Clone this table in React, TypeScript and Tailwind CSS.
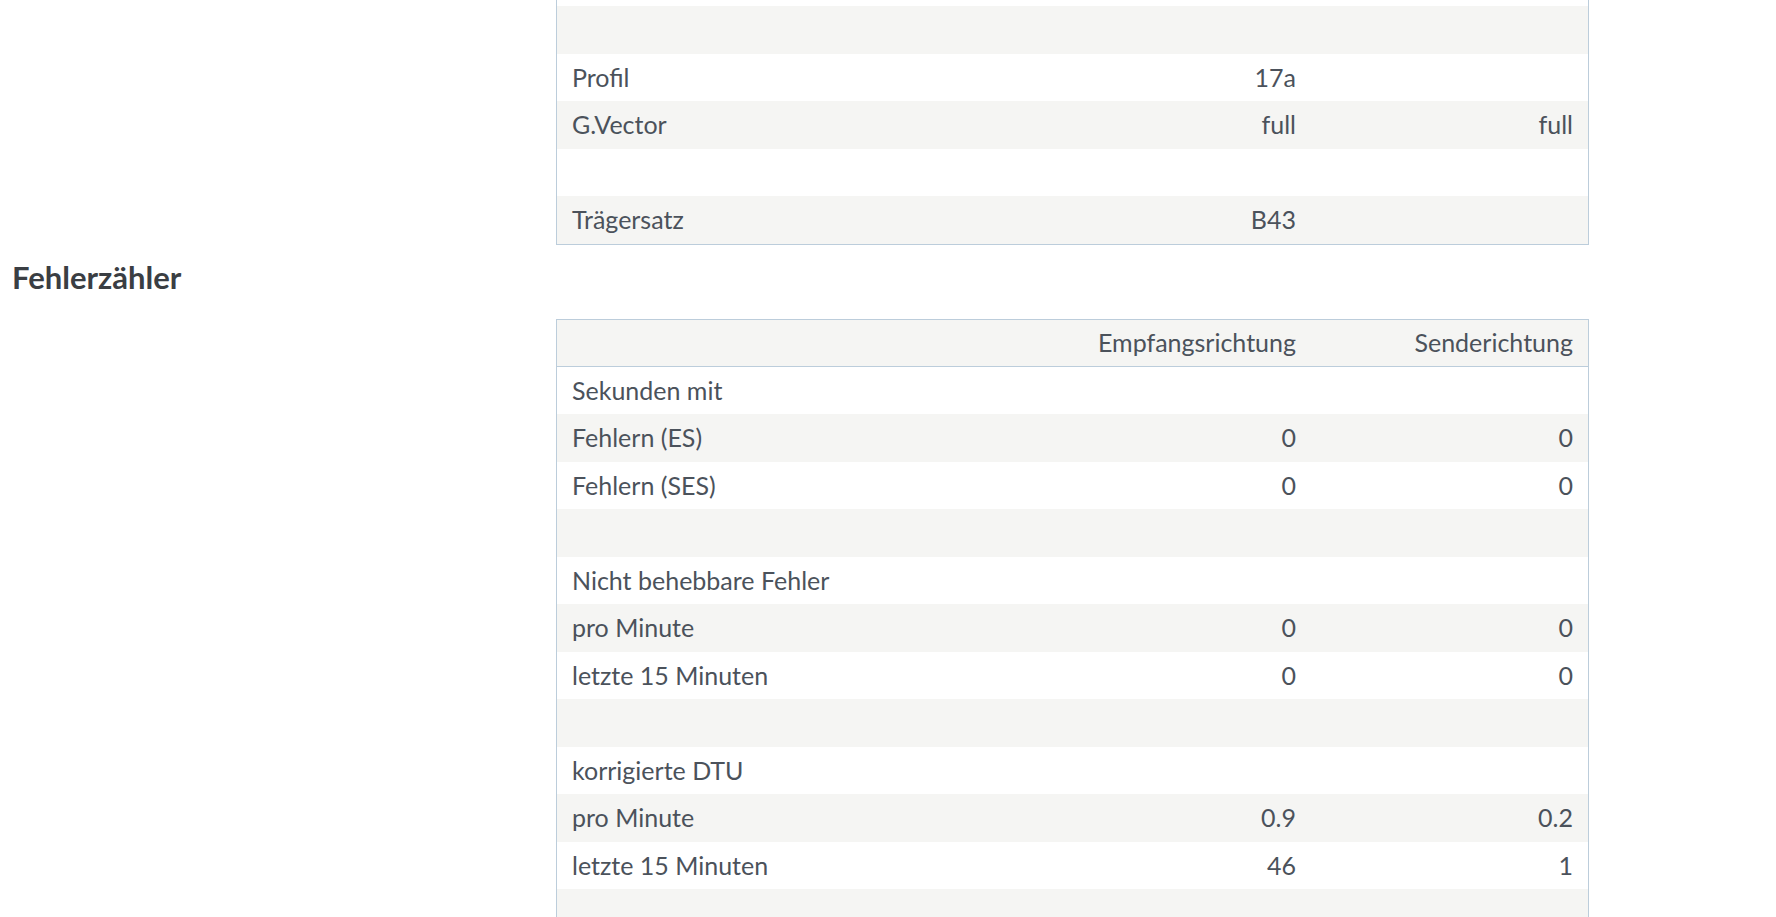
import React from "react";

type Row = { label?: React.ReactNode; rx?: string; tx?: string };

const lineRows: Row[] = [
     {},
     {},
     { label: "Profil", rx: "17a" },
     { label: "G.Vector", rx: "full", tx: "full" },
     {},
     { label: "Trägersatz", rx: "B43" },
];

const errorRows: Row[] = [
     { label: "Sekunden mit" },
     { label: "Fehlern (ES)", rx: "0", tx: "0" },
     { label: "Fehlern (SES)", rx: "0", tx: "0" },
     {},
     {
          label: (
               <>
                    Nicht behebbare Fehler
                    <br />
                    (CRC)
               </>
          ),
     },
     { label: "pro Minute", rx: "0", tx: "0" },
     { label: "letzte 15 Minuten", rx: "0", tx: "0" },
     {},
     { label: "korrigierte DTU" },
     { label: "pro Minute", rx: "0.9", tx: "0.2" },
     { label: "letzte 15 Minuten", rx: "46", tx: "1" },
     {},
];

function TableRow({ row, index }: { row: Row; index: number }) {
     return (
          <div
               className={`grid grid-cols-[481px_273px_1fr] h-[47.5px] overflow-hidden leading-[34px] ${
                    index % 2 === 0 ? "bg-white" : "bg-[#f5f5f3]"
               }`}
          >
               <div className="px-[15px] pt-[6px]">{row.label}</div>
               <div className="px-[15px] pt-[6px] text-right">{row.rx}</div>
               <div className="px-[15px] pt-[6px] text-right">{row.tx}</div>
          </div>
     );
}

export default function App() {
     return (
          <div className="h-[917px] overflow-hidden bg-white font-['Lato',sans-serif] text-[25px] text-[#4b525b]">
               {/* Leitungsdaten (scrolled) */}
               <div className="ml-[556px] w-[1033px] -mt-[41.5px] border-x border-b border-[#bccddb]">
                    {lineRows.map((row, i) => (
                         <TableRow key={i} row={row} index={i} />
                    ))}
               </div>

               {/* Fehlerzähler */}
               <h2 className="pl-[12px] pt-[12px] h-[74px] text-[31px] font-bold leading-[40px] text-[#3a3e43]">
                    Fehlerzähler
               </h2>

               <div className="ml-[556px] w-[1033px] border border-[#bccddb]">
                    <div className="grid grid-cols-[481px_273px_1fr] h-[47px] border-b border-[#bccddb] bg-[#f5f5f3] leading-[35px]">
                         <div className="px-[15px] pt-[5px]" />
                         <div className="px-[15px] pt-[5px] text-right">
                              Empfangsrichtung
                         </div>
                         <div className="px-[15px] pt-[5px] text-right">
                              Senderichtung
                         </div>
                    </div>
                    {errorRows.map((row, i) => (
                         <TableRow key={i} row={row} index={i} />
                    ))}
               </div>
          </div>
     );
}
